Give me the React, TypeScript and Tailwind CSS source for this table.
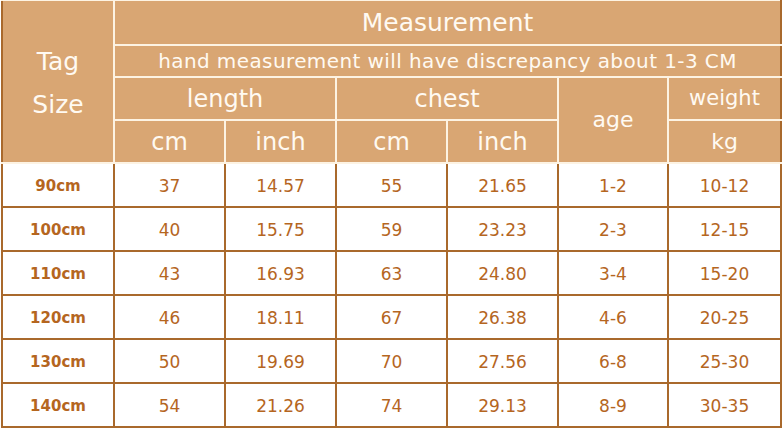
import React from "react";

const rows = [
  ["90cm", "37", "14.57", "55", "21.65", "1-2", "10-12"],
  ["100cm", "40", "15.75", "59", "23.23", "2-3", "12-15"],
  ["110cm", "43", "16.93", "63", "24.80", "3-4", "15-20"],
  ["120cm", "46", "18.11", "67", "26.38", "4-6", "20-25"],
  ["130cm", "50", "19.69", "70", "27.56", "6-8", "25-30"],
  ["140cm", "54", "21.26", "74", "29.13", "8-9", "30-35"],
];

const font = { fontFamily: '"Comic Sans MS", "DejaVu Sans", sans-serif' };

export default function App() {
  const h = "border-2 border-[#fdf3e3] bg-[#d9a673] text-[#fffaf2] text-center align-middle p-0 leading-none";
  const b = "border-2 border-[#a9692c] text-center align-middle p-0 pt-[2px] leading-none text-[#b5661f] h-[44px]";
  return (
    <div className="w-[782px] h-[429px] bg-white overflow-hidden" style={font}>
      <table className="border-collapse table-fixed w-[779px] ml-[1px] -mt-[1px]">
        <colgroup>
          <col className="w-[112px]" />
          <col className="w-[111px]" />
          <col className="w-[111px]" />
          <col className="w-[111px]" />
          <col className="w-[111px]" />
          <col className="w-[110px]" />
          <col className="w-[113px]" />
        </colgroup>
        <thead>
          <tr className="h-[45px]">
            <td rowSpan={4} className={h + " text-[25px] border-l-[#a9692c] !leading-[43px] pt-[2px]"}>
              <div>Tag</div>
              <div>Size</div>
            </td>
            <td colSpan={6} className={h + " text-[25px] border-r-[#a9692c]"}>Measurement</td>
          </tr>
          <tr className="h-[32px]">
            <td colSpan={6} className={h + " text-[20px] tracking-[0.4px] border-r-[#a9692c]"}>
              hand measurement will have discrepancy about 1-3 CM
            </td>
          </tr>
          <tr className="h-[43px]">
            <td colSpan={2} className={h + " text-[24px]"}>length</td>
            <td colSpan={2} className={h + " text-[24px]"}>chest</td>
            <td rowSpan={2} className={h + " text-[22px]"}>age</td>
            <td className={h + " text-[21px] border-r-[#a9692c]"}>weight</td>
          </tr>
          <tr className="h-[43px]">
            <td className={h + " text-[24px]"}>cm</td>
            <td className={h + " text-[24px]"}>inch</td>
            <td className={h + " text-[24px]"}>cm</td>
            <td className={h + " text-[24px]"}>inch</td>
            <td className={h + " text-[22px] border-r-[#a9692c]"}>kg</td>
          </tr>
        </thead>
        <tbody>
          {rows.map((r) => (
            <tr key={r[0]}>
              {r.map((c, i) => (
                <td
                  key={i}
                  className={
                    b +
                    (i === 0 ? " font-bold text-[15px] text-[#b0601a]" : " text-[17px]")
                  }
                >
                  {c}
                </td>
              ))}
            </tr>
          ))}
        </tbody>
      </table>
    </div>
  );
}
